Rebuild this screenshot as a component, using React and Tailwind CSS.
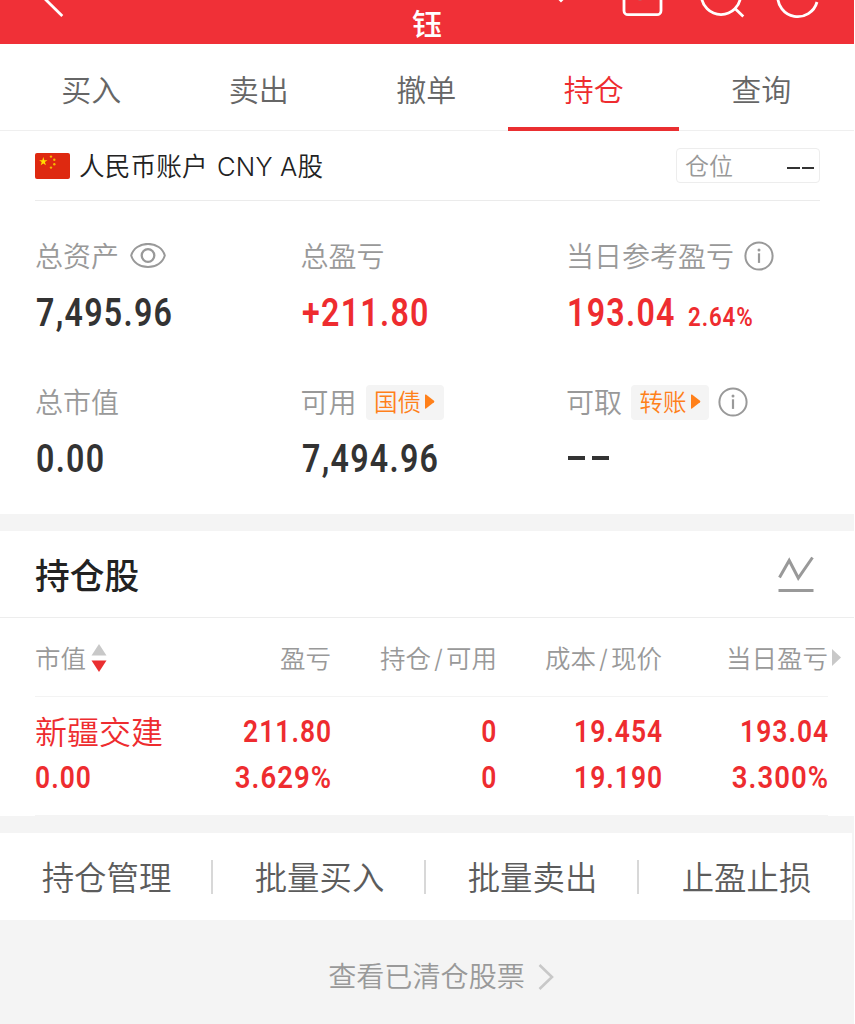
import clsx from 'clsx';

const tabs = ['买入', '卖出', '撤单', '持仓', '查询'];

const holdings = [
  { name: '新疆交建', value: '0.00', profit: '211.80', rate: '3.629%', held: '0', usable: '0', cost: '19.454', price: '19.190', day: '193.04', dayRate: '3.300%' },
];

const actions = ['持仓管理', '批量买入', '批量卖出', '止盈止损'];

// narrow figures used for every amount
function Num({ children, className, right }) {
  const percent = children.endsWith('%');

  return (
    <span
      className={clsx(
        "inline-block whitespace-nowrap font-['Roboto',sans-serif] font-semibold tracking-[0.04em]",
        right ? '-mr-[0.04em] origin-right text-right' : 'origin-left text-left',
        percent ? 'scale-x-[0.86]' : 'scale-x-[0.825]',
        className
      )}
    >
      {children}
    </span>
  );
}

function InfoIcon() {
  return (
    <svg className="h-[30px] w-[30px] shrink-0" viewBox="0 0 30 30" fill="none" stroke="#999" strokeWidth="2">
      <circle cx="15" cy="15" r="13.6" />
      <path d="M15 12.3v9.6" strokeWidth="2.2" />
      <circle cx="15" cy="9" r="1.5" fill="#999" stroke="none" />
    </svg>
  );
}

function EyeIcon() {
  return (
    <svg className="ml-[11px] h-[26px] w-[36px] shrink-0" viewBox="0 0 36 26" fill="none" stroke="#999" strokeWidth="2">
      <path d="M1.2 12.5C3.2 5.4 10 .9 18 .9S32.8 5.4 34.8 12.5C32.8 19.6 26 24.1 18 24.1S3.2 19.6 1.2 12.5Z" />
      <circle cx="18" cy="12.5" r="6.3" strokeWidth="2.3" />
    </svg>
  );
}

function Tag({ label }) {
  return (
    <span className="ml-[9px] flex h-[35px] w-[78px] items-center rounded-[4px] bg-[#f4f4f4] pl-[8.5px] text-[23.5px] text-[#ff801a]">
      <span className="pt-px">{label}</span>
      <svg className="-mt-[2px] ml-[4px] h-[15px] w-[10px]" viewBox="0 0 10 15" fill="#ff801a">
        <path d="M0 1Q0 0 1 .6L9 6.7Q9.8 7.5 9 8.3L1 14.4Q0 15 0 14Z" />
      </svg>
    </span>
  );
}

function Stat({ label, extra, children }) {
  return (
    <div>
      <div className="flex h-[40px] items-center text-[28px] text-[#999]">
        <span className="pt-[2px]">{label}</span>
        {extra}
      </div>
      <div className="mt-[14px] flex h-[46px] items-center pl-px text-[39px] text-[#333]">{children}</div>
    </div>
  );
}

function Flag() {
  return (
    <svg className="h-[26px] w-[35px]" viewBox="0 0 35 26">
      <rect width="35" height="26" rx="2" fill="#de2910" />
      <path d="M8.3 4 9.3 7.2H12.5L9.9 9.1 10.9 12.3 8.3 10.4 5.7 12.3 6.7 9.1 4.1 7.2H7.3Z" fill="#ffde00" />
      <g fill="#f5b800">
        <circle cx="16" cy="3.6" r="1.2" />
        <circle cx="19.3" cy="6.8" r="1.2" />
        <circle cx="19.3" cy="11.2" r="1.2" />
        <circle cx="16" cy="14.6" r="1.2" />
      </g>
    </svg>
  );
}

function Header() {
  return (
    <header className="relative h-[44px] bg-[#f03037]">
      <svg className="absolute inset-0 h-[44px] w-full" viewBox="0 0 854 44" fill="none" stroke="#fff" strokeWidth="2.8">
        <path d="M43 -3 62.3 16" />
        <path d="M556 -4.5 561 .5 566 -4.5" />
        <rect x="624" y="-20" width="37" height="34.7" rx="4" />
        <path d="M638.5 0h3" stroke="#c9595c" strokeWidth="1.5" />
        <circle cx="721" cy="-5" r="19.6" />
        <path d="M735 8.5 743.3 16.4" />
        <path d="M777.8 -5A20 20 0 0 0 817 2" />
      </svg>
      <h1 className="pt-[3px] text-center text-[30px] font-medium leading-[42px] text-white">钰</h1>
    </header>
  );
}

export default function App() {
  return (
    <div className="h-[1024px] w-[855px] overflow-hidden bg-white pr-px font-['Inter','Noto_Sans_CJK_SC',sans-serif] font-[350]">
      <Header />

      <nav className="flex h-[87px] border-b border-[#efefef] pl-[7.5px]">
        {tabs.map((tab) => (
          <div key={tab} className="flex w-[167.5px] flex-none justify-center">
            <div
              className={clsx(
                'flex h-[87px] w-[171px] shrink-0 items-center justify-center border-b-[4px] pt-[9px] text-[30px]',
                tab === '持仓' ? 'border-[#ea2f31] text-[#ee2c2f]' : 'border-transparent text-[#666]'
              )}
            >
              {tab}
            </div>
          </div>
        ))}
      </nav>

      {/* account */}
      <section className="h-[383px] pl-[35px] pr-[34px]">
        <div className="flex h-[70px] items-center justify-between border-b border-[#ebebeb]">
          <div className="flex items-center gap-[9px] pt-[2px] text-[25.6px] text-[#222]">
            <Flag />
            <span className="pt-[2px] tracking-[0.15px]">
              人民币账户 <span className="ml-[2px] font-light">CNY A</span>股
            </span>
          </div>
          <div className="flex h-[35px] w-[144px] items-center justify-between rounded-[4px] border border-[#ededed] pl-[8px] pr-[5px] text-[24px] text-[#999]">
            <span className="pt-[3px]">仓位</span>
            <span className="flex gap-[2px] pt-[5px]">
              <i className="h-[2px] w-[12.5px] bg-[#333]" />
              <i className="h-[2px] w-[12.5px] bg-[#333]" />
            </span>
          </div>
        </div>

        <div className="grid grid-cols-[265.5px_265.5px_1fr] gap-y-[46px] pt-[35px]">
          <Stat label="总资产" extra={<EyeIcon />}>
            <Num>7,495.96</Num>
          </Stat>
          <Stat label="总盈亏">
            <Num className="text-[#ee2c2f]">+211.80</Num>
          </Stat>
          <Stat label="当日参考盈亏" extra={<span className="ml-[10px]"><InfoIcon /></span>}>
            <span className="flex items-baseline text-[#ee2c2f]">
              <Num className="w-[121px]">193.04</Num>
              <Num className="text-[26px]">2.64%</Num>
            </span>
          </Stat>
          <Stat label="总市值">
            <Num>0.00</Num>
          </Stat>
          <Stat label="可用" extra={<Tag label="国债" />}>
            <Num>7,494.96</Num>
          </Stat>
          <Stat label="可取" extra={<><Tag label="转账" /><span className="ml-[9px]"><InfoIcon /></span></>}>
            <span className="flex gap-[7px] pb-[3px] pl-px">
              <i className="h-[4px] w-[17px] bg-[#333]" />
              <i className="h-[4px] w-[17px] bg-[#333]" />
            </span>
          </Stat>
        </div>
      </section>

      <div className="h-[17px] bg-[#f4f4f4]" />

      {/* holdings */}
      <section className="h-[285px]">
        <div className="flex h-[87px] items-center justify-between border-b border-[#ededed] pl-[35px] pr-[40px]">
          <h2 className="pt-[4px] text-[34.7px] font-medium text-[#222]">持仓股</h2>
          <svg className="h-[36px] w-[36px]" viewBox="0 0 36 36" fill="none" stroke="#999" strokeWidth="3">
            <path d="M1.5 21.5 11.2 4.5 20.3 22 34.5 1.5" />
            <path d="M.5 34.5h35" />
          </svg>
        </div>

        <div className="relative ml-[35px] mr-[26px] grid h-[79px] grid-cols-[155px_141px_165px_166px_166px] items-center border-b border-[#f3f3f3] pt-[4px] text-right text-[25.5px] text-[#999]">
          <span className="flex items-center">
            市值
            <svg className="-mt-[2px] ml-[5px] h-[28px] w-[16px]" viewBox="0 0 16 28">
              <path d="M8 0 15.5 11.5H.5Z" fill="#c8c8c8" />
              <path d="M8 28 .5 16.5H15.5Z" fill="#ea2f31" />
            </svg>
          </span>
          <span>盈亏</span>
          <span className="-mr-px">持仓<span className="mx-[3px]">/</span>可用</span>
          <span>成本<span className="mx-[3px]">/</span>现价</span>
          <span>当日盈亏</span>
          <svg className="absolute -right-[13px] top-[31px] h-[17px] w-[9px]" viewBox="0 0 9 17" fill="#c8c8c8">
            <path d="M0 0 9 8.5 0 17Z" />
          </svg>
        </div>

        {holdings.map((h) => (
          <div
            key={h.name}
            className="ml-[35px] mr-[26px] grid h-[119px] grid-cols-[155px_141px_165px_166px_166px] grid-rows-[46px_46px] border-b border-[#f4f4f4] pt-[11px] text-[32px] leading-[46px] text-[#ee2c2f]"
          >
            <span className="pt-[2px]">{h.name}</span>
            <Num right>{h.profit}</Num>
            <Num right>{h.held}</Num>
            <Num right>{h.cost}</Num>
            <Num right>{h.day}</Num>
            <Num>{h.value}</Num>
            <Num right>{h.rate}</Num>
            <Num right>{h.usable}</Num>
            <Num right>{h.price}</Num>
            <Num right>{h.dayRate}</Num>
          </div>
        ))}
      </section>

      <div className="bg-[#f4f4f4] pt-[17px]">
        <div className="flex h-[87px] w-[852px] items-center bg-white">
          {actions.map((a, i) => (
            <div
              key={a}
              className={clsx(
                'flex h-[34px] w-[213px] flex-none items-center justify-center pl-[2px] pt-[5px] text-[32.4px] text-[#5c5c5c]',
                i < actions.length - 1 && 'border-r-2 border-[#d8d8d8]'
              )}
            >
              {a}
            </div>
          ))}
        </div>
        <div className="flex h-[104px] items-center justify-center pl-[28px] pt-[9px] text-[28.1px] text-[#999]">
          <span className="pt-[2px]">查看已清仓股票</span>
          <svg className="ml-[13px] h-[26px] w-[16px]" viewBox="0 0 16 26" fill="none" stroke="#c8c8c8" strokeWidth="2.6">
            <path d="M1.5 1 14 13 1.5 25" />
          </svg>
        </div>
      </div>
    </div>
  );
}
